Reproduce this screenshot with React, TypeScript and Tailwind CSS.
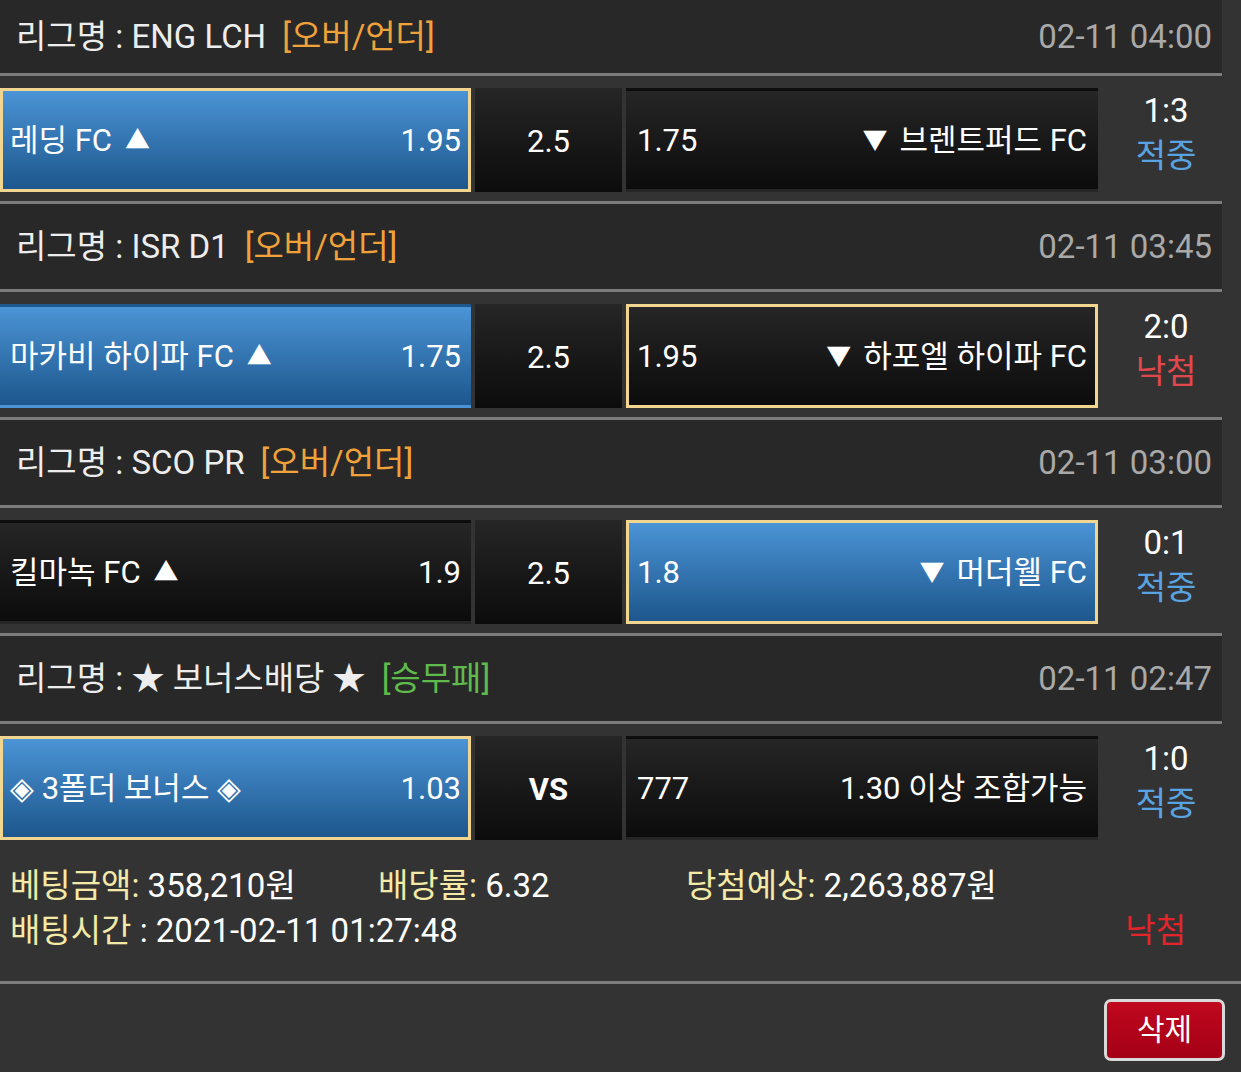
import type { ReactNode } from 'react';

type Pick = 'home' | 'away' | null;

type Bet = {
  league: ReactNode;
  tag: string;
  tagColor: string;
  time: string;
  home: ReactNode;
  homeOdds: string;
  mid: string;
  midBold?: boolean;
  awayOdds: string;
  away: ReactNode;
  score: string;
  result: '적중' | '낙첨';
  pick: Pick;
  selected: Pick;
};

const Up = () => <span className="text-[25px] ml-[13px]">▲</span>;
const Down = () => <span className="text-[25px] mr-[12px]">▼</span>;

const BETS: Bet[] = [
  {
    league: 'ENG LCH',
    tag: '[오버/언더]',
    tagColor: 'text-[#f0a23a]',
    time: '02-11 04:00',
    home: <>레딩 FC<Up /></>,
    homeOdds: '1.95',
    mid: '2.5',
    awayOdds: '1.75',
    away: <><Down />브렌트퍼드 FC</>,
    score: '1:3',
    result: '적중',
    pick: 'home',
    selected: 'home',
  },
  {
    league: 'ISR D1',
    tag: '[오버/언더]',
    tagColor: 'text-[#f0a23a]',
    time: '02-11 03:45',
    home: <>마카비 하이파 FC<Up /></>,
    homeOdds: '1.75',
    mid: '2.5',
    awayOdds: '1.95',
    away: <><Down />하포엘 하이파 FC</>,
    score: '2:0',
    result: '낙첨',
    pick: 'home',
    selected: 'away',
  },
  {
    league: 'SCO PR',
    tag: '[오버/언더]',
    tagColor: 'text-[#f0a23a]',
    time: '02-11 03:00',
    home: <>킬마녹 FC<Up /></>,
    homeOdds: '1.9',
    mid: '2.5',
    awayOdds: '1.8',
    away: <><Down />머더웰 FC</>,
    score: '0:1',
    result: '적중',
    pick: 'away',
    selected: 'away',
  },
  {
    league: '★ 보너스배당 ★',
    tag: '[승무패]',
    tagColor: 'text-[#5fba4c]',
    time: '02-11 02:47',
    home: '◈ 3폴더 보너스 ◈',
    homeOdds: '1.03',
    mid: 'VS',
    midBold: true,
    awayOdds: '777',
    away: '1.30 이상 조합가능',
    score: '1:0',
    result: '적중',
    pick: 'home',
    selected: 'home',
  },
];

const blue = 'bg-gradient-to-b from-[#4b94d6] to-[#1d578d]';
const dark = 'bg-gradient-to-b from-[#262626] to-[#0c0c0c]';

function Sep({ full }: { full?: boolean }) {
  return <div className={`h-[3px] bg-[#7c7c7c] ${full ? 'w-full' : 'w-[1222px]'}`} />;
}

function Section({ bet, first, last }: { bet: Bet; first?: boolean; last?: boolean }) {
  return (
    <>
      <div
        className={`w-[1222px] bg-[#282828] flex items-center justify-between pl-[16px] pr-[10px] text-[33px] ${
          first ? 'h-[73px]' : 'h-[85px]'
        }`}
      >
        <div className="flex items-center text-[#ededed]">
          <span>리그명 : {bet.league}</span>
          <span className={`ml-[16px] ${bet.tagColor}`}>{bet.tag}</span>
        </div>
        <span className="text-[#a9a9a9]">{bet.time}</span>
      </div>
      <Sep />
      <div className="w-[1222px] h-[125px] flex pt-[12px] pb-[9px] gap-[4px]">
        <div
          className={`w-[471px] flex items-center justify-between border-[3px] px-[7px] ${
            bet.pick === 'home' ? blue : dark
          } ${bet.selected === 'home' ? 'border-[#f2d58e]' : 'border-transparent'}`}
        >
          <span className="flex items-center">{bet.home}</span>
          <span>{bet.homeOdds}</span>
        </div>
        <div
          className={`w-[147px] flex items-center justify-center pt-[3px] ${dark} ${
            bet.midBold ? 'font-bold' : ''
          }`}
        >
          {bet.mid}
        </div>
        <div
          className={`w-[472px] flex items-center justify-between border-[3px] px-[8px] ${
            bet.pick === 'away' ? blue : dark
          } ${bet.selected === 'away' ? 'border-[#f2d58e]' : 'border-transparent'}`}
        >
          <span>{bet.awayOdds}</span>
          <span className="flex items-center">{bet.away}</span>
        </div>
        <div className="flex-1 flex flex-col items-center justify-center leading-[45px] pl-[8px] pb-[14px] text-[33px]">
          <span>{bet.score}</span>
          <span className={bet.result === '적중' ? 'text-[#5aa3e2]' : 'text-[#e2474b]'}>
            {bet.result}
          </span>
        </div>
      </div>
      {!last && <Sep />}
    </>
  );
}

export default function App() {
  return (
    <div
      className="w-[1241px] h-[1072px] overflow-hidden bg-[#333333] text-white text-[31px] leading-none"
      style={{ fontFamily: 'Roboto, "Noto Sans CJK KR", sans-serif' }}
    >
      {BETS.map((b, i) => (
        <Section key={i} bet={b} first={i === 0} last={i === BETS.length - 1} />
      ))}
      <div className="w-[1222px] h-[132px] pl-[10px] pr-[36px] pt-[20px] flex flex-col gap-[12px] leading-[33px] text-[33px]">
        <div className="flex">
          <span className="w-[368px]">
            <span className="text-[#f3eaa8]">베팅금액:</span> 358,210원
          </span>
          <span className="w-[308px]">
            <span className="text-[#f3eaa8]">배당률:</span> 6.32
          </span>
          <span>
            <span className="text-[#f3eaa8]">당첨예상:</span> 2,263,887원
          </span>
        </div>
        <div className="flex justify-between">
          <span>
            <span className="text-[#f3eaa8]">배팅시간</span> : 2021-02-11 01:27:48
          </span>
          <span className="text-[#e3242b]">낙첨</span>
        </div>
      </div>
      <Sep full />
      <div className="flex justify-end pr-[16px] pt-[15px]">
        <button className="w-[121px] h-[62px] rounded-[7px] border-[3px] border-[#d9d9d9] bg-gradient-to-b from-[#c0081e] to-[#a40016] text-white text-[30px] flex items-center justify-center">
          삭제
        </button>
      </div>
    </div>
  );
}
